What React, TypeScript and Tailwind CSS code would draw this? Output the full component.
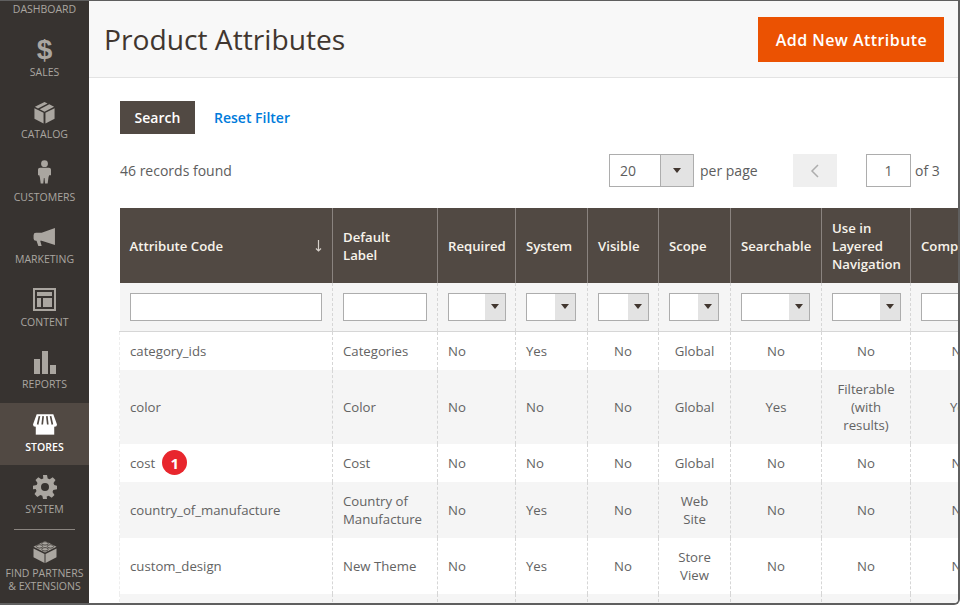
import type { ReactNode } from "react";

const font = "font-['Open_Sans',sans-serif]";

const Box = () => (
  <svg viewBox="0 0 24 24" className="h-[23px] w-[23px]" fill="currentColor">
    <path d="M12 1 2 6l3.2 1.7L15.2 2.6 12 1Z" />
    <path d="M17 3.5 7 8.6l5 2.5 10-5-5-2.6Z" />
    <path d="M1.5 7.5v11L11 23.5V12.3L1.5 7.5Z" />
    <path d="M22.5 7.5v11l-9.500 5V12.300l9.500-4.800Z" />
  </svg>
);

const Person = () => (
  <svg viewBox="0 0 24 30" className="-mt-[5px] h-[24px] w-[19px]" fill="currentColor">
    <circle cx="12" cy="4.500" r="4.300" />
    <path d="M6.500 9.500h11c1.800 0 2.700 1.100 2.700 2.800v6.700h-2.400l-.8 3-1 7.500h-3.300l-.7-7h-.8l-.7 7H7.200l-1-7.500-.8-3H3.800v-6.700c0-1.700.9-2.800 2.700-2.800Z" />
  </svg>
);

const Megaphone = () => (
  <svg viewBox="0 0 24 20" className="h-[19px] w-[23px]" fill="currentColor">
    <path d="M23 0v18L9 13.500H7.500L9 19H5.500L3.600 13.500H3A2.500 2.500 0 0 1 .500 11V7.500A2.500 2.500 0 0 1 3 5h6L23 0Z" />
  </svg>
);

const Content = () => (
  <svg viewBox="0 0 23 23" className="h-[23px] w-[23px]" fill="currentColor">
    <path fillRule="evenodd" d="M0 0h23v23H0V0Zm2 2v19h19V2H2Z" />
    <path d="M4 4h15v4H4zM4 10h4v9H4zM10 10h9v9h-9z" />
  </svg>
);

const Bars = () => (
  <svg viewBox="0 0 22 23" className="h-[23px] w-[22px]" fill="currentColor">
    <path d="M0 8h6v15H0zM8 0h6v23H8zM16 14h6v9h-6z" />
  </svg>
);

const Store = () => (
  <svg viewBox="0 0 26 22" className="h-[21px] w-[24px]">
    <path d="M3 10h20v12H3z" fill="#fff" />
    <path d="M4 0h18l4 11a2.500 2.500 0 0 1-5 0 2.700 2.700 0 0 1-5 0 3 3 0 0 1-6 0 2.700 2.700 0 0 1-5 0 2.500 2.500 0 0 1-5 0L4 0Z" fill="#fff" />
    <path d="M7 2 5 11M11 2l-1 9M15 2l1 9M19 2l2 9" stroke="#514943" strokeWidth="1.800" />
  </svg>
);

const Gear = () => (
  <svg viewBox="0 0 24 24" className="h-[24px] w-[24px]" fill="currentColor">
    <path fillRule="evenodd" d="M10 0h4l.7 3.500 2 .8 3-2 2.800 2.800-2 3 .8 2L24 10.800v3.400l-3.700.7-.8 2 2 3-2.800 2.800-3-2-2 .8L14 24h-4l-.7-3.300-2-.8-3 2-2.800-2.800 2-3-.8-2L0 14.200v-3.400l3.700-.7.800-2-2-3L5.300 2.300l3 2 2-.8L10 0Zm2 8a4 4 0 1 0 0 8 4 4 0 0 0 0-8Z" />
  </svg>
);

const Brick = () => (
  <svg viewBox="0 0 24 23" className="h-[23px] w-[24px]" fill="currentColor">
    <path d="M12 1 23.500 6.800 12 12.500.500 6.800 12 1Z" />
    <path d="M.500 8.500v8.700L11.500 23v-9L.500 8.500ZM23.500 8.500v8.700L12.500 23v-9l11-5.500Z" />
    <g fill="currentColor" stroke="#373330" strokeWidth=".8">
      <ellipse cx="12" cy="3.400" rx="3.200" ry="1.700" />
      <ellipse cx="6.500" cy="6.400" rx="3.200" ry="1.700" />
      <ellipse cx="17.500" cy="6.400" rx="3.200" ry="1.700" />
      <ellipse cx="12" cy="9.300" rx="3.200" ry="1.700" />
    </g>
  </svg>
);

const menu: { label: ReactNode; icon: ReactNode; active?: boolean }[] = [
  { label: "Dashboard", icon: <div className="h-[23px]" /> },
  { label: "Sales", icon: <span className="font-['Liberation_Sans',sans-serif] text-[28px] leading-[24px] font-bold">$</span> },
  { label: "Catalog", icon: <Box /> },
  { label: "Customers", icon: <Person /> },
  { label: "Marketing", icon: <Megaphone /> },
  { label: "Content", icon: <Content /> },
  { label: "Reports", icon: <Bars /> },
  { label: "Stores", icon: <Store />, active: true },
  { label: "System", icon: <Gear /> },
];

function Sidebar() {
  return (
    <aside className="mt-[-36px] flex w-[89px] shrink-0 flex-col bg-[#373330] text-[#aaa6a0]">
      {menu.map((item, i) => (
        <div
          key={i}
          className={`flex h-[62.5px] flex-col items-center pt-[9px] ${item.active ? "bg-[#514943] text-white" : ""}`}
        >
          <div className="flex h-[26px] items-center justify-center">{item.icon}</div>
          <div className={`mt-[2px] text-[10.500px] leading-[15px] uppercase ${item.active ? "font-semibold" : ""}`}>
            {item.label}
          </div>
        </div>
      ))}
      <div className="mx-[14px] mt-px mb-[10px] h-px bg-[#8a8580]" />
      <div className="flex flex-col items-center">
        <Brick />
        <div className="mt-[4px] text-center text-[10.500px] leading-[13px] uppercase">
          Find Partners
          <br />& Extensions
        </div>
      </div>
    </aside>
  );
}

function Select({ width, value }: { width: string; value?: string }) {
  return (
    <div className={`flex h-[28px] border border-[#adadad] bg-white ${width}`}>
      <div className="flex-1 pl-[10px] leading-[26px]">{value}</div>
      <div className="flex w-[20px] items-center justify-center bg-[#e3e3e3]">
        <span className="h-0 w-0 border-x-[4px] border-t-[5px] border-x-transparent border-t-[#41362f]" />
      </div>
    </div>
  );
}

type Column = { title: ReactNode; width: string; center?: boolean };

const columns: Column[] = [
  { title: "Attribute Code", width: "w-[213px]" },
  { title: "Default Label", width: "w-[105px]" },
  { title: "Required", width: "w-[78px]" },
  { title: "System", width: "w-[72px]" },
  { title: "Visible", width: "w-[71px]", center: true },
  { title: "Scope", width: "w-[72px]", center: true },
  { title: "Searchable", width: "w-[91px]", center: true },
  { title: "Use in Layered Navigation", width: "w-[89px]", center: true },
  { title: "Comparable", width: "w-[100px]", center: true },
];

const filterWidths = ["w-[58px]", "w-[50px]", "w-[51px]", "w-[50px]", "w-[69px]", "w-[69px]", "w-[69px]"];

const rows: { cells: ReactNode[]; height: string }[] = [
  { height: "h-[38.500px]", cells: ["category_ids", "Categories", "No", "Yes", "No", "Global", "No", "No", "No"] },
  { height: "h-[74px]", cells: ["color", "Color", "No", "No", "No", "Global", "Yes", "Filterable (with results)", "Yes"] },
  {
    height: "h-[38.500px]",
    cells: [
      <span className="inline-flex items-center">
        cost
        <span className="ml-[7px] flex h-[25px] w-[25px] items-center justify-center rounded-full bg-[#e8262d] text-[15px] font-bold text-white">
          1
        </span>
      </span>,
      "Cost", "No", "No", "No", "Global", "No", "No", "No",
    ],
  },
  { height: "h-[56px]", cells: ["country_of_manufacture", "Country of Manufacture", "No", "Yes", "No", "Web Site", "No", "No", "No"] },
  { height: "h-[56px]", cells: ["custom_design", "New Theme", "No", "Yes", "No", "Store View", "No", "No", "No"] },
  { height: "h-[38px]", cells: ["", "", "", "", "", "", "", "", ""] },
];

function Grid() {
  return (
    <table className="-ml-px w-[891px] max-w-none table-fixed border-collapse text-[13.200px] leading-[18px] text-[#636363]">
      <colgroup>
        {columns.map((c, i) => (
          <col key={i} className={c.width} />
        ))}
      </colgroup>
      <thead>
        <tr className="h-[75px] bg-[#514943] text-left text-[#f7f3eb]">
          {columns.map((c, i) => (
            <th key={i} className="border-x border-[#8a837f] px-[10px] align-middle font-semibold first:border-l-0">
              {i === 0 ? (
                <div className="flex items-center justify-between">
                  {c.title}
                  <svg viewBox="0 0 7 12" className="h-[12px] w-[7px]" fill="none" stroke="#d6d0ca" strokeWidth="1.200">
                    <path d="M3.500 0v11M1 8.500 3.500 11 6 8.500" />
                  </svg>
                </div>
              ) : (
                c.title
              )}
            </th>
          ))}
        </tr>
        <tr className="h-[48px] border-b border-[#d6d6d6] bg-[#f5f5f5]">
          <td className="border-r border-dashed border-[#d6d6d6] px-[10px]">
            <div className="h-[28px] border border-[#adadad] bg-white" />
          </td>
          <td className="border-x border-dashed border-[#d6d6d6] px-[10px]">
            <div className="h-[28px] border border-[#adadad] bg-white" />
          </td>
          {filterWidths.map((w, i) => (
            <td key={i} className="border-x border-dashed border-[#d6d6d6] px-[10px]">
              <Select width={w} />
            </td>
          ))}
        </tr>
      </thead>
      <tbody>
        {rows.map((row, i) => (
          <tr key={i} className={`${row.height} ${i % 2 === 1 ? "bg-[#f5f5f5]" : "bg-white"}`}>
            {row.cells.map((cell, j) => (
              <td
                key={j}
                className={`border-x border-dashed border-[#d6d6d6] px-[10px] align-middle ${columns[j].center ? "text-center" : "text-left"} ${j === 0 ? "border-l-[#eeeeee]" : ""}`}
              >
                {cell}
              </td>
            ))}
          </tr>
        ))}
      </tbody>
    </table>
  );
}

function Selector() {
  return (
    <div className="flex h-[33px] w-[85px] border border-[#adadad] bg-white">
      <div className="flex-1 pl-[10px] leading-[31px]">20</div>
      <div className="flex w-[33px] items-center justify-center border-l border-[#adadad] bg-[#e3e3e3]">
        <span className="h-0 w-0 border-x-[4px] border-t-[5px] border-x-transparent border-t-[#41362f]" />
      </div>
    </div>
  );
}

export default function App() {
  return (
    <div className={`${font} flex h-[605px] w-[960px] overflow-hidden rounded-br-[6px] border-t border-r-2 border-b-2 border-[#5f5f5f] bg-white text-[14px] text-[#5d5d5d]`}>
      <Sidebar />
      <main className="min-w-0 flex-1 overflow-hidden">
        <header className="flex h-[77px] items-center justify-between border-b border-[#e3e3e3] bg-[#f8f8f8] pr-[14px] pl-[15px]">
          <h1 className="text-[28.200px] text-[#41362f]">Product Attributes</h1>
          <button className="h-[45px] w-[186px] bg-[#eb5202] pt-px pl-px text-[16px] font-semibold tracking-[0.450px] text-white">
            Add New Attribute
          </button>
        </header>
        <div className="pt-[23px] pl-[31px]">
          <div className="flex items-center">
            <button className="h-[33px] w-[75px] bg-[#514943] font-semibold text-white">Search</button>
            <span className="ml-[19px] font-semibold text-[#007bdb]">Reset Filter</span>
          </div>
          <div className="mt-[20px] flex h-[33px] items-center">
            <span className="w-[489px]">46 records found</span>
            <Selector />
            <span className="ml-[6px] w-[93px]">per page</span>
            <div className="flex h-[33px] w-[44px] items-center justify-center bg-[#efefef] text-[#adadad]">
              <svg viewBox="0 0 10 16" className="h-[16px] w-[10px]" fill="none" stroke="currentColor" strokeWidth="1.500">
                <path d="M8 2 2 8l6 6" />
              </svg>
            </div>
            <div className="ml-[29px] flex h-[33px] w-[45px] items-center justify-center border border-[#adadad]">1</div>
            <span className="ml-[4px]">of 3</span>
          </div>
          <div className="mt-[21px]">
            <Grid />
          </div>
        </div>
      </main>
    </div>
  );
}
